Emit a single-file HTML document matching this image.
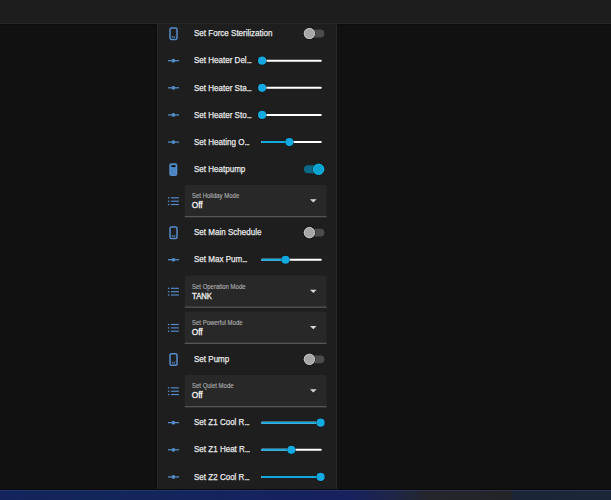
<!DOCTYPE html>
<html><head><meta charset="utf-8">
<style>
html,body{margin:0;padding:0;}
body{width:611px;height:500px;overflow:hidden;background:#111111;position:relative;font-family:"Liberation Sans",sans-serif;}
svg.bg{position:absolute;left:0;top:0;}
.nm{position:absolute;left:193.7px;height:12px;line-height:12px;font-size:9.5px;color:#ececec;white-space:nowrap;transform:scaleX(0.845);transform-origin:0 0;-webkit-text-stroke:0.25px #ececec;}
.el{letter-spacing:-0.85px;}
.lab{position:absolute;left:191.7px;font-size:6.8px;line-height:8px;color:#b0b0b0;white-space:nowrap;transform:scaleX(0.88);transform-origin:0 0;-webkit-text-stroke:0.12px #b0b0b0;}
.val{position:absolute;left:191.7px;font-size:8.3px;line-height:10px;color:#f0f0f0;white-space:nowrap;-webkit-text-stroke:0.3px #f0f0f0;transform-origin:0 0;}
</style></head><body>
<svg class="bg" width="611" height="500" viewBox="0 0 611 500">
<defs><linearGradient id="tbg" x1="0" x2="1" y1="0" y2="0">
<stop offset="0" stop-color="#14235c"/><stop offset="0.15" stop-color="#13265a"/><stop offset="0.40" stop-color="#15235e"/><stop offset="0.57" stop-color="#17215e"/><stop offset="0.64" stop-color="#1e2548"/><stop offset="0.70" stop-color="#24262c"/><stop offset="0.836" stop-color="#232428"/><stop offset="0.84" stop-color="#1b2538"/><stop offset="1" stop-color="#1c2639"/>
</linearGradient></defs>
<rect x="0" y="0" width="611" height="22" fill="#1d1d1d"/>
<rect x="0" y="22" width="611" height="0.6" fill="#1f1f1f"/>
<rect x="0" y="22.6" width="611" height="1.4" fill="#262626"/>
<rect x="0" y="24" width="611" height="1" fill="#0d0d0d"/>
<rect x="0" y="25" width="611" height="1" fill="#0f0f0f"/>
<rect x="156" y="24" width="1" height="465" fill="#0d0d0d"/>
<rect x="157" y="24" width="180" height="465" fill="#282828"/>
<rect x="158" y="24" width="178" height="465" fill="#1e1e1e"/>
<rect x="170.0" y="28.00" width="7.0" height="11.5" rx="1.4" fill="none" stroke="#558dcb" stroke-width="1.5"/><rect x="172.0" y="36.60" width="1.3" height="1.1" fill="#558dcb"/><rect x="173.7" y="36.60" width="1.3" height="1.1" fill="#558dcb"/><rect x="170.8" y="35.90" width="5.4" height="0.6" fill="#558dcb" opacity="0.5"/>
<rect x="304" y="29.60" width="20.4" height="7.8" rx="3.9" fill="#4c4c4c"/><circle cx="309.4" cy="33.50" r="6.2" fill="#000" opacity="0.5"/><circle cx="309.4" cy="33.50" r="5.6" fill="#a6a6a6"/><circle cx="309.4" cy="33.50" r="5.15" fill="none" stroke="#c4c4c4" stroke-width="0.9"/>
<rect x="167.9" y="60.03" width="11.2" height="1.25" fill="#558dcb"/><circle cx="173.4" cy="60.65" r="1.85" fill="#558dcb"/>
<rect x="261.1" y="59.65" width="60.7" height="2" rx="1" fill="#fff"/>
<circle cx="262.10" cy="60.65" r="4.7" fill="#000" opacity="0.45"/><circle cx="262.10" cy="60.65" r="4.1" fill="#12a8e0"/>
<rect x="167.9" y="87.18" width="11.2" height="1.25" fill="#558dcb"/><circle cx="173.4" cy="87.80" r="1.85" fill="#558dcb"/>
<rect x="261.1" y="86.80" width="60.7" height="2" rx="1" fill="#fff"/>
<circle cx="262.10" cy="87.80" r="4.7" fill="#000" opacity="0.45"/><circle cx="262.10" cy="87.80" r="4.1" fill="#12a8e0"/>
<rect x="167.9" y="114.33" width="11.2" height="1.25" fill="#558dcb"/><circle cx="173.4" cy="114.95" r="1.85" fill="#558dcb"/>
<rect x="261.1" y="113.95" width="60.7" height="2" rx="1" fill="#fff"/>
<circle cx="262.10" cy="114.95" r="4.7" fill="#000" opacity="0.45"/><circle cx="262.10" cy="114.95" r="4.1" fill="#12a8e0"/>
<rect x="167.9" y="141.48" width="11.2" height="1.25" fill="#558dcb"/><circle cx="173.4" cy="142.10" r="1.85" fill="#558dcb"/>
<rect x="261.1" y="141.10" width="60.7" height="2" rx="1" fill="#fff"/>
<rect x="261.1" y="141.10" width="28.32" height="2" rx="1" fill="#12a8e0"/>
<circle cx="289.42" cy="142.10" r="4.7" fill="#000" opacity="0.45"/><circle cx="289.42" cy="142.10" r="4.1" fill="#12a8e0"/>
<rect x="170.0" y="163.89" width="6.6" height="11.5" rx="1.4" fill="#4b82c0" stroke="#558dcb" stroke-width="1.4"/><rect x="171.3" y="165.24" width="4.3" height="1.7" rx="0.6" fill="#0a0a0a"/>
<rect x="304" y="165.34" width="20.4" height="7.8" rx="3.9" fill="#0b6a87"/><circle cx="318.6" cy="169.24" r="6.2" fill="#000" opacity="0.5"/><circle cx="318.6" cy="169.24" r="5.6" fill="#0aa3d0"/><circle cx="318.6" cy="169.24" r="5.15" fill="none" stroke="#14b4e4" stroke-width="0.9"/>
<rect x="167.9" y="197.17" width="1.5" height="1.3" fill="#558dcb"/><rect x="170.9" y="197.24" width="8" height="1.15" fill="#558dcb"/><rect x="167.9" y="200.57" width="1.5" height="1.3" fill="#558dcb"/><rect x="170.9" y="200.64" width="8" height="1.15" fill="#558dcb"/><rect x="167.9" y="203.87" width="1.5" height="1.3" fill="#558dcb"/><rect x="170.9" y="203.94" width="8" height="1.15" fill="#558dcb"/>
<path d="M184.7,216.08 V187.58 Q184.7,185.08 187.2,185.08 H324.1 Q326.6,185.08 326.6,187.58 V216.08 Z" fill="#282828"/><rect x="184.7" y="215.98" width="141.9" height="1.3" fill="#575757"/><path d="M310.0,199.28 H316.6 L313.3,202.58 Z" fill="#d8d8d8"/>
<rect x="170.0" y="227.09" width="7.0" height="11.5" rx="1.4" fill="none" stroke="#558dcb" stroke-width="1.5"/><rect x="172.0" y="235.69" width="1.3" height="1.1" fill="#558dcb"/><rect x="173.7" y="235.69" width="1.3" height="1.1" fill="#558dcb"/><rect x="170.8" y="234.99" width="5.4" height="0.6" fill="#558dcb" opacity="0.5"/>
<rect x="304" y="228.69" width="20.4" height="7.8" rx="3.9" fill="#4c4c4c"/><circle cx="309.4" cy="232.59" r="6.2" fill="#000" opacity="0.5"/><circle cx="309.4" cy="232.59" r="5.6" fill="#a6a6a6"/><circle cx="309.4" cy="232.59" r="5.15" fill="none" stroke="#c4c4c4" stroke-width="0.9"/>
<rect x="167.9" y="259.12" width="11.2" height="1.25" fill="#558dcb"/><circle cx="173.4" cy="259.74" r="1.85" fill="#558dcb"/>
<rect x="261.1" y="258.74" width="60.7" height="2" rx="1" fill="#fff"/>
<rect x="261.1" y="258.74" width="24.40" height="2" rx="1" fill="#12a8e0"/>
<circle cx="285.50" cy="259.74" r="4.7" fill="#000" opacity="0.45"/><circle cx="285.50" cy="259.74" r="4.1" fill="#12a8e0"/>
<rect x="167.9" y="287.66" width="1.5" height="1.3" fill="#558dcb"/><rect x="170.9" y="287.73" width="8" height="1.15" fill="#558dcb"/><rect x="167.9" y="291.06" width="1.5" height="1.3" fill="#558dcb"/><rect x="170.9" y="291.13" width="8" height="1.15" fill="#558dcb"/><rect x="167.9" y="294.36" width="1.5" height="1.3" fill="#558dcb"/><rect x="170.9" y="294.43" width="8" height="1.15" fill="#558dcb"/>
<path d="M184.7,306.58 V278.08 Q184.7,275.58 187.2,275.58 H324.1 Q326.6,275.58 326.6,278.08 V306.58 Z" fill="#282828"/><rect x="184.7" y="306.48" width="141.9" height="1.3" fill="#575757"/><path d="M310.0,289.78 H316.6 L313.3,293.08 Z" fill="#d8d8d8"/>
<rect x="167.9" y="323.86" width="1.5" height="1.3" fill="#558dcb"/><rect x="170.9" y="323.93" width="8" height="1.15" fill="#558dcb"/><rect x="167.9" y="327.26" width="1.5" height="1.3" fill="#558dcb"/><rect x="170.9" y="327.33" width="8" height="1.15" fill="#558dcb"/><rect x="167.9" y="330.56" width="1.5" height="1.3" fill="#558dcb"/><rect x="170.9" y="330.63" width="8" height="1.15" fill="#558dcb"/>
<path d="M184.7,342.78 V314.28 Q184.7,311.78 187.2,311.78 H324.1 Q326.6,311.78 326.6,314.28 V342.78 Z" fill="#282828"/><rect x="184.7" y="342.68" width="141.9" height="1.3" fill="#575757"/><path d="M310.0,325.98 H316.6 L313.3,329.28 Z" fill="#d8d8d8"/>
<rect x="170.0" y="353.79" width="7.0" height="11.5" rx="1.4" fill="none" stroke="#558dcb" stroke-width="1.5"/><rect x="172.0" y="362.39" width="1.3" height="1.1" fill="#558dcb"/><rect x="173.7" y="362.39" width="1.3" height="1.1" fill="#558dcb"/><rect x="170.8" y="361.69" width="5.4" height="0.6" fill="#558dcb" opacity="0.5"/>
<rect x="304" y="355.39" width="20.4" height="7.8" rx="3.9" fill="#4c4c4c"/><circle cx="309.4" cy="359.29" r="6.2" fill="#000" opacity="0.5"/><circle cx="309.4" cy="359.29" r="5.6" fill="#a6a6a6"/><circle cx="309.4" cy="359.29" r="5.15" fill="none" stroke="#c4c4c4" stroke-width="0.9"/>
<rect x="167.9" y="387.21" width="1.5" height="1.3" fill="#558dcb"/><rect x="170.9" y="387.28" width="8" height="1.15" fill="#558dcb"/><rect x="167.9" y="390.61" width="1.5" height="1.3" fill="#558dcb"/><rect x="170.9" y="390.68" width="8" height="1.15" fill="#558dcb"/><rect x="167.9" y="393.91" width="1.5" height="1.3" fill="#558dcb"/><rect x="170.9" y="393.98" width="8" height="1.15" fill="#558dcb"/>
<path d="M184.7,406.12 V377.62 Q184.7,375.12 187.2,375.12 H324.1 Q326.6,375.12 326.6,377.62 V406.12 Z" fill="#282828"/><rect x="184.7" y="406.02" width="141.9" height="1.3" fill="#575757"/><path d="M310.0,389.32 H316.6 L313.3,392.62 Z" fill="#d8d8d8"/>
<rect x="167.9" y="422.01" width="11.2" height="1.25" fill="#558dcb"/><circle cx="173.4" cy="422.63" r="1.85" fill="#558dcb"/>
<rect x="261.1" y="421.63" width="60.7" height="2" rx="1" fill="#fff"/>
<rect x="261.1" y="421.63" width="59.50" height="2" rx="1" fill="#12a8e0"/>
<circle cx="320.60" cy="422.63" r="4.7" fill="#000" opacity="0.45"/><circle cx="320.60" cy="422.63" r="4.1" fill="#12a8e0"/>
<rect x="167.9" y="449.16" width="11.2" height="1.25" fill="#558dcb"/><circle cx="173.4" cy="449.78" r="1.85" fill="#558dcb"/>
<rect x="261.1" y="448.78" width="60.7" height="2" rx="1" fill="#fff"/>
<rect x="261.1" y="448.78" width="30.25" height="2" rx="1" fill="#12a8e0"/>
<circle cx="291.35" cy="449.78" r="4.7" fill="#000" opacity="0.45"/><circle cx="291.35" cy="449.78" r="4.1" fill="#12a8e0"/>
<rect x="167.9" y="476.31" width="11.2" height="1.25" fill="#558dcb"/><circle cx="173.4" cy="476.93" r="1.85" fill="#558dcb"/>
<rect x="261.1" y="475.93" width="60.7" height="2" rx="1" fill="#fff"/>
<rect x="261.1" y="475.93" width="59.50" height="2" rx="1" fill="#12a8e0"/>
<circle cx="320.60" cy="476.93" r="4.7" fill="#000" opacity="0.45"/><circle cx="320.60" cy="476.93" r="4.1" fill="#12a8e0"/>
<rect x="0" y="489" width="611" height="1" fill="#0b0b09"/>
<rect x="0" y="490" width="611" height="10" fill="url(#tbg)"/>
<rect x="0" y="490" width="611" height="1" fill="rgb(60,80,140)" opacity="0.35"/>
</svg>
<div class="nm" style="top:27.20px">Set Force Sterilization</div>
<div class="nm" style="top:54.35px">Set Heater Del<span class="el">...</span></div>
<div class="nm" style="top:81.50px">Set Heater Sta<span class="el">...</span></div>
<div class="nm" style="top:108.65px">Set Heater Sto<span class="el">...</span></div>
<div class="nm" style="top:135.80px">Set Heating O<span class="el">...</span></div>
<div class="nm" style="top:162.94px">Set Heatpump</div>
<div class="lab" style="top:192.28px">Set Holiday Mode</div><div class="val" style="top:200.38px;transform:scaleX(1)">Off</div>
<div class="nm" style="top:226.29px">Set Main Schedule</div>
<div class="nm" style="top:253.44px">Set Max Pum<span class="el">...</span></div>
<div class="lab" style="top:282.78px">Set Operation Mode</div><div class="val" style="top:290.88px;transform:scaleX(0.93)">TANK</div>
<div class="lab" style="top:318.98px">Set Powerful Mode</div><div class="val" style="top:327.08px;transform:scaleX(1)">Off</div>
<div class="nm" style="top:352.99px">Set Pump</div>
<div class="lab" style="top:382.32px">Set Quiet Mode</div><div class="val" style="top:390.42px;transform:scaleX(1)">Off</div>
<div class="nm" style="top:416.33px">Set Z1 Cool R<span class="el">...</span></div>
<div class="nm" style="top:443.48px">Set Z1 Heat R<span class="el">...</span></div>
<div class="nm" style="top:470.63px">Set Z2 Cool R<span class="el">...</span></div>
</body></html>
